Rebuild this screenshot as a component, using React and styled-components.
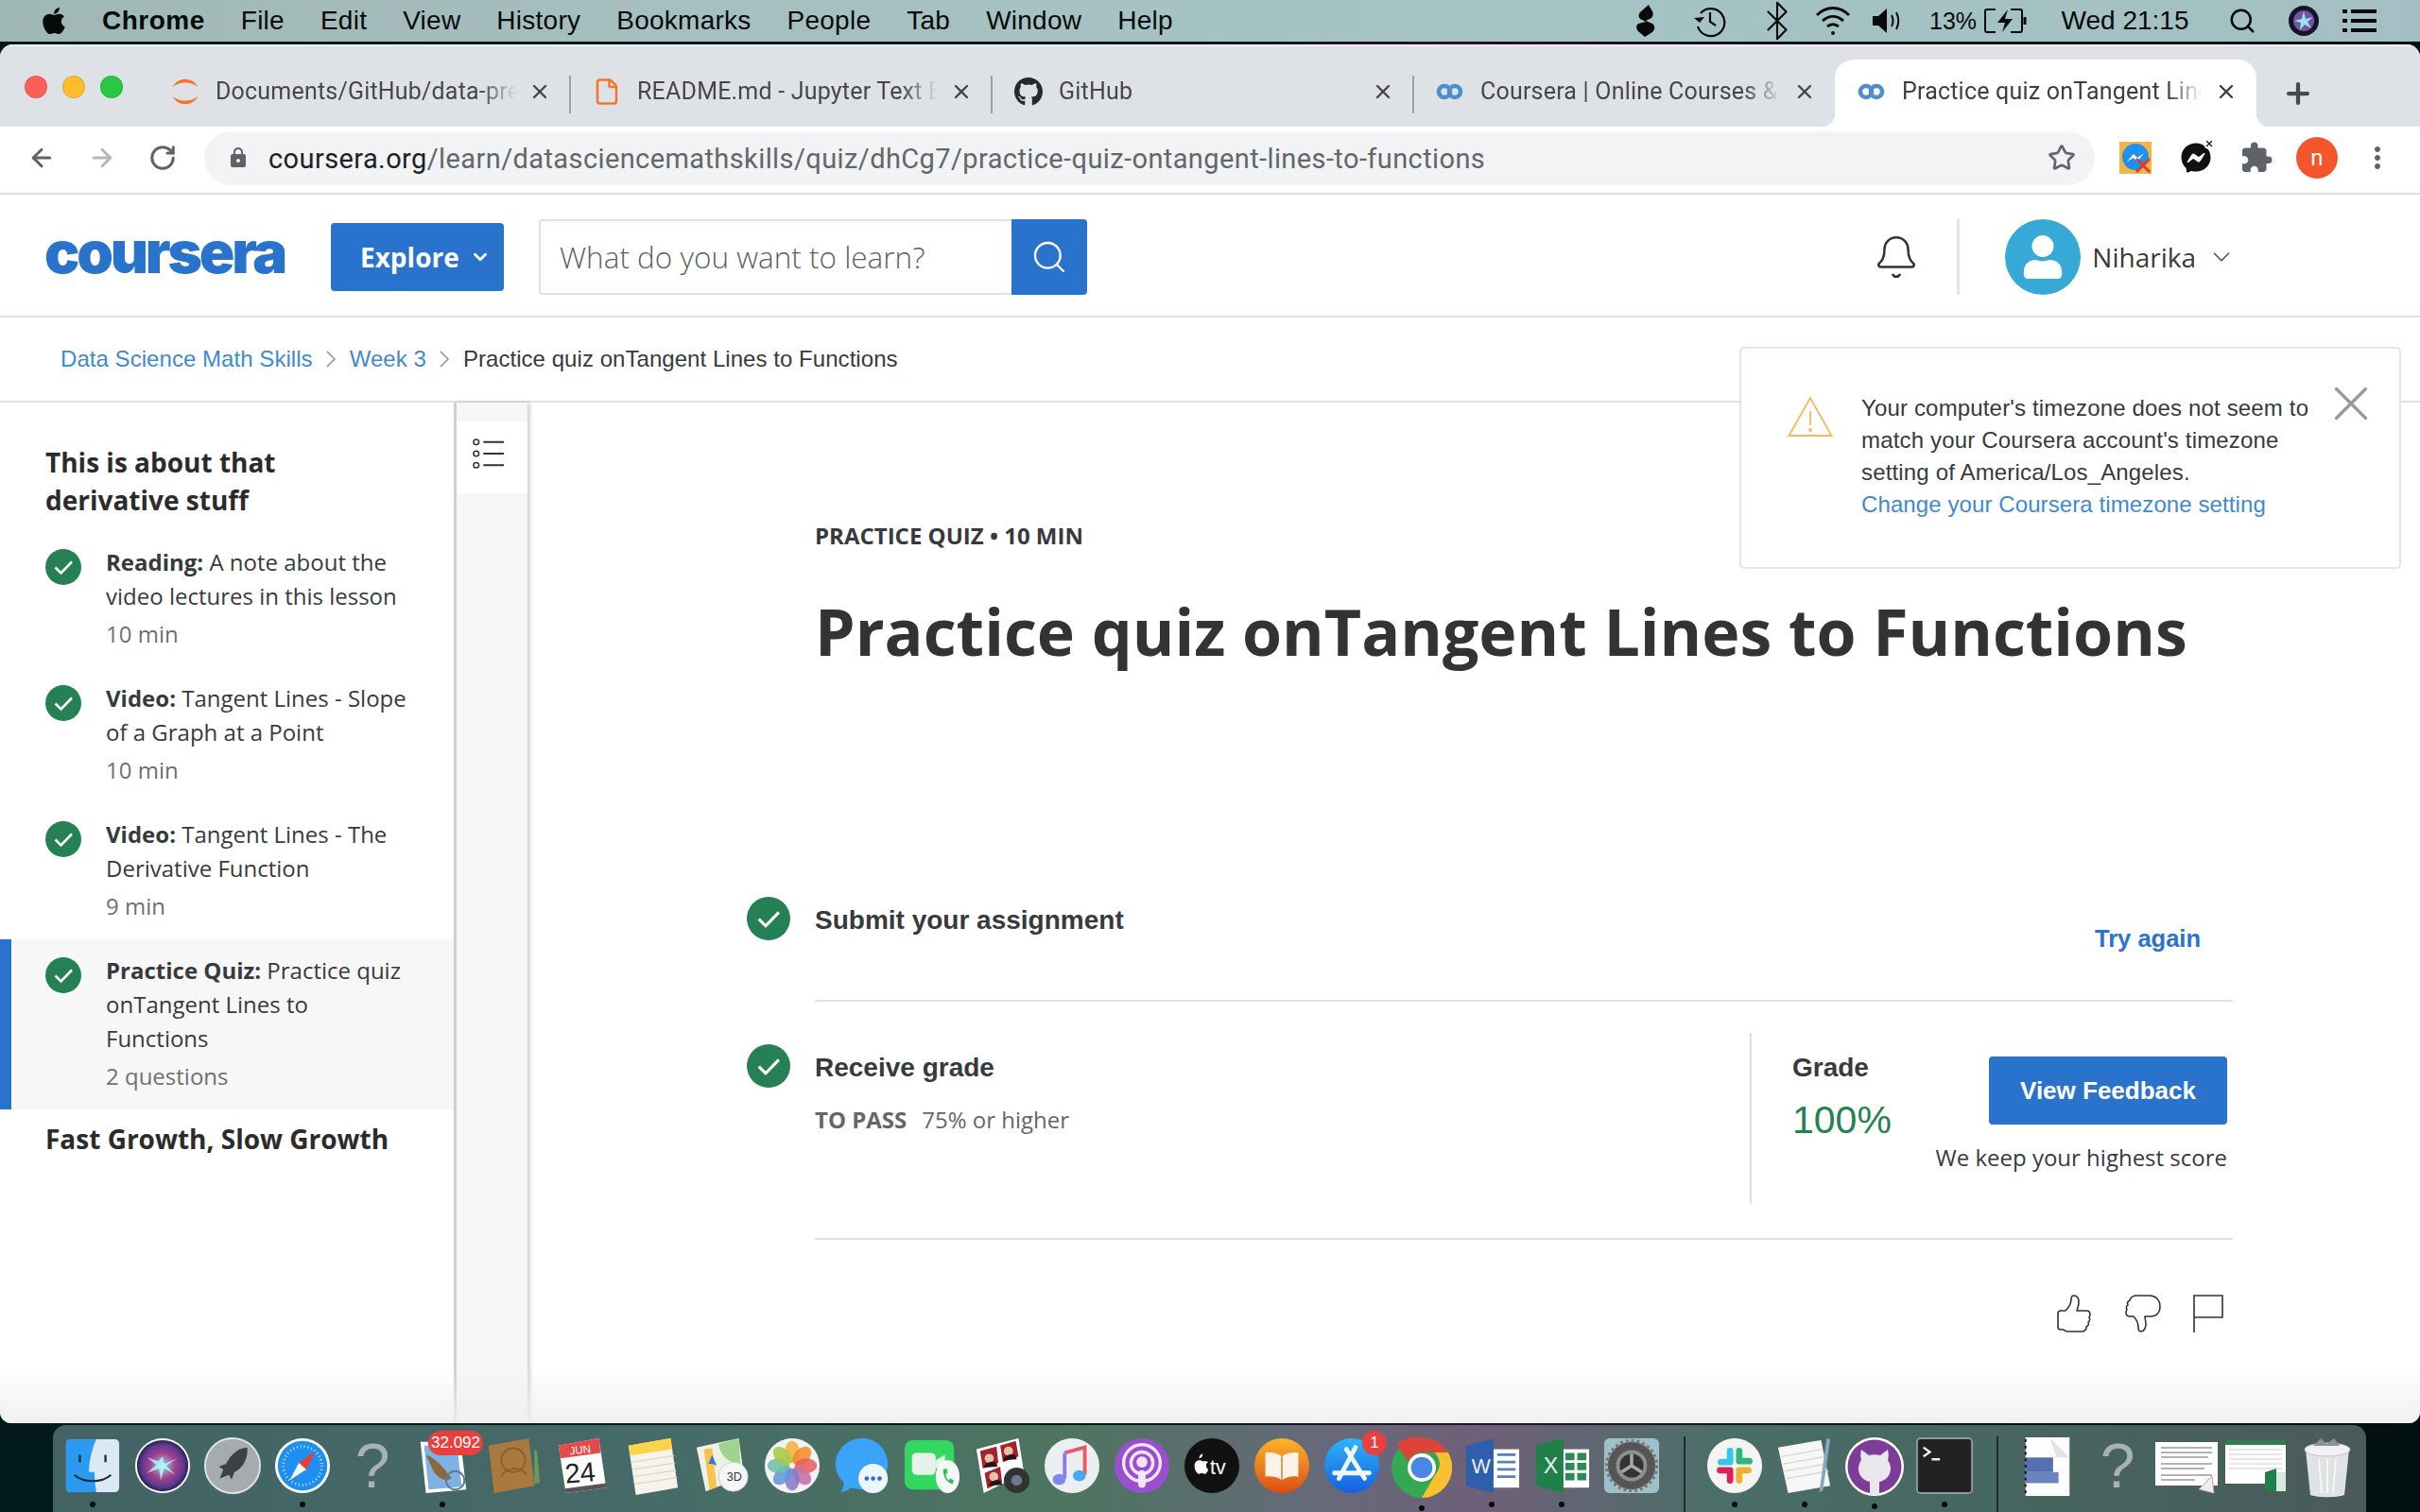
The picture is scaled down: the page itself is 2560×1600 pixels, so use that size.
import React from "react";
import styled, { createGlobalStyle } from "styled-components";
import { ArrowLeft, ArrowRight, RotateCw, Star, Plus, Search, ChevronDown, Bell, X, Bluetooth, File } from "lucide-react";
import { FaApple, FaGithub, FaFacebookMessenger, FaUser } from "react-icons/fa";
import { MdExtension, MdMoreVert, MdLock } from "react-icons/md";

const GlobalStyle = createGlobalStyle`
  html, body { margin: 0; padding: 0; background: #041618; }
  * { box-sizing: border-box; }
  body { font-family: "Liberation Sans", Arial, sans-serif; }
`;

const Desktop = styled.div`
  width: 2560px;
  height: 1600px;
  overflow: hidden;
  display: flex;
  flex-direction: column;
  background: linear-gradient(90deg, #021a1c 0%, #04191b 45%, #2a1030 60%, #0a1414 80%, #020f10 100%);
`;

/* mac menu bar */
const MenuBar = styled.div`
  height: 44px;
  flex: none;
  display: flex;
  align-items: center;
  padding: 0 46px 0 42px;
  background: linear-gradient(90deg, #a0b8b4 0%, #a6bfc0 30%, #a5c4c4 62%, #a3bfc3 100%);
  color: #060a0a;
  font-size: 28px;
`;

const AppleMark = styled.span`
  display: flex;
  width: 30px;
  margin-right: 36px;
`;

const MenuItem = styled.span`
  margin-right: 38px;
  font-weight: ${(p) => (p.$bold ? 700 : 400)};
  letter-spacing: ${(p) => (p.$bold ? 0.5 : 0.25)}px;
  white-space: nowrap;
`;

const Status = styled.div`
  margin-left: auto;
  display: flex;
  align-items: center;
`;

const StatusItem = styled.span`
  display: flex;
  align-items: center;
  justify-content: center;
  margin-left: ${(p) => p.$ml}px;
  width: ${(p) => p.$w}px;
  font-size: ${(p) => p.$fs || 28}px;
  white-space: nowrap;
`;

const Window = styled.div`
  position: relative;
  margin-top: 3px;
  height: 1459px;
  flex: none;
  display: flex;
  flex-direction: column;
  background: #fff;
  border-radius: 14px 14px 12px 12px;
  overflow: hidden;
`;

const TabStrip = styled.div`
  height: 87px;
  flex: none;
  display: flex;
  align-items: flex-end;
  background: #dee1e6;
  padding-left: 26px;
  box-shadow: inset 0 2px 0 #eceef0;
`;

const Lights = styled.div`
  width: 131px;
  height: 71px;
  display: flex;
  gap: 16px;
  padding-top: 17px;
`;

const Light = styled.span`
  width: 24px;
  height: 24px;
  border-radius: 50%;
  background: ${(p) => p.$c};
  border: 1px solid rgba(0, 0, 0, 0.1);
`;

const Tab = styled.div`
  position: relative;
  width: 446px;
  height: 71px;
  display: flex;
  align-items: center;
  padding: 0 20px 3px 24px;
  background: ${(p) => (p.$active ? "#fff" : "transparent")};
  border-radius: 20px 20px 0 0;
  color: ${(p) => (p.$active ? "#3c4043" : "#45474b")};
  &::before {
    content: "";
    display: ${(p) => (p.$divider ? "block" : "none")};
    position: absolute;
    left: -1px;
    top: 17px;
    width: 2px;
    height: 40px;
    background: #9ea1a5;
  }
`;

const TabFlare = styled.span`
  position: absolute;
  bottom: 0;
  ${(p) => (p.$side === "left" ? "left: -14px;" : "right: -14px;")}
  width: 14px;
  height: 14px;
  background: radial-gradient(circle at ${(p) => (p.$side === "left" ? "0 0" : "100% 0")}, transparent 14px, #fff 14.5px);
`;

const TabIcon = styled.span`
  width: 30px;
  height: 30px;
  flex: none;
  display: flex;
  align-items: center;
  justify-content: center;
`;

const TabTitle = styled.span`
  margin-left: 17px;
  width: 318px;
  flex: none;
  font-family: Roboto, sans-serif;
  font-size: 25px;
  line-height: 34px;
  letter-spacing: 0.2px;
  white-space: nowrap;
  overflow: hidden;
  -webkit-mask-image: linear-gradient(90deg, #000 88%, transparent 100%);
  mask-image: linear-gradient(90deg, #000 88%, transparent 100%);
`;

const TabClose = styled.span`
  margin-left: 13px;
  display: flex;
  width: 24px;
  justify-content: center;
`;

const NewTab = styled.span`
  display: flex;
  margin: 0 0 18px 27px;
  color: #46484b;
`;

const Toolbar = styled.div`
  height: 72px;
  flex: none;
  display: flex;
  align-items: center;
  padding: 0 0 4px 29px;
  border-bottom: 2px solid #dcdcdf;
  color: #5f6368;
`;

const NavButton = styled.span`
  display: flex;
  width: 30px;
  margin-right: ${(p) => p.$mr}px;
  color: ${(p) => p.$c || "#5f6368"};
`;

const UrlBar = styled.div`
  width: 2000px;
  height: 57px;
  flex: none;
  display: flex;
  align-items: center;
  padding: 0 20px 0 24px;
  border-radius: 29px;
  background: #f1f3f4;
  font-family: Roboto, sans-serif;
  font-size: 29px;
  line-height: 36px;
  letter-spacing: 0.4px;
  color: #63666a;
  b { font-weight: 400; color: #202124; }
`;

const UrlText = styled.span`
  margin-left: 20px;
  margin-top: 1px;
  flex: 1;
  white-space: nowrap;
`;

const Extensions = styled.div`
  display: flex;
  align-items: center;
  gap: 28px;
  padding-left: 25px;
`;

const ExtIcon = styled.span`
  position: relative;
  width: 36px;
  height: 36px;
  display: flex;
  align-items: center;
  justify-content: center;
`;

const ExtBadge = styled.span`
  position: absolute;
  top: -3px;
  right: -2px;
  width: 12px;
  height: 12px;
  border-radius: 50%;
  background: #fff;
  display: flex;
  align-items: center;
  justify-content: center;
  color: #111;
`;

const Profile = styled.span`
  width: 44px;
  height: 44px;
  margin: 0 -4px;
  border-radius: 50%;
  background: #f4562c;
  color: #fff;
  font-family: Roboto, sans-serif;
  font-size: 24px;
  display: flex;
  align-items: center;
  justify-content: center;
`;

/* coursera page */
const SiteHeader = styled.header`
  height: 130px;
  flex: none;
  display: flex;
  align-items: center;
  padding: 3px 195px 0 47px;
  border-bottom: 2px solid #e1e1e1;
`;

const Logo = styled.span`
  width: 256px;
  font-family: Inter, sans-serif;
  font-weight: 900;
  font-size: 62px;
  line-height: 60px;
  letter-spacing: -3.2px;
  color: #2a73cc;
  white-space: nowrap;
  margin-top: -10px;
`;

const Explore = styled.button`
  margin-left: 47px;
  width: 183px;
  height: 72px;
  border: 0;
  border-radius: 4px;
  padding: 0 0 0 31px;
  background: #2a73cc;
  color: #fff;
  font-family: "Open Sans", sans-serif;
  font-weight: 700;
  font-size: 28px;
  display: flex;
  align-items: center;
  gap: 11px;
`;

const SearchBox = styled.div`
  margin-left: 37px;
  height: 80px;
  display: flex;
`;

const SearchInput = styled.div`
  width: 500px;
  border: 2px solid #e1e1e1;
  border-right: 0;
  border-radius: 4px 0 0 4px;
  padding-left: 20px;
  display: flex;
  align-items: center;
  font-family: "Open Sans", sans-serif;
  font-weight: 300;
  font-size: 31.500px;
  color: #5f5f5f;
`;

const SearchButton = styled.span`
  width: 80px;
  background: #2a73cc;
  border-radius: 0 4px 4px 0;
  color: #fff;
  display: flex;
  align-items: center;
  justify-content: center;
`;

const BellIcon = styled.span`
  margin-left: auto;
  display: flex;
  color: #333;
`;

const HeaderDivider = styled.span`
  margin: 0 48px 0 39px;
  width: 3px;
  height: 80px;
  background: #e5e5e5;
`;

const Avatar = styled.span`
  width: 80px;
  height: 80px;
  border-radius: 50%;
  background: #36a9d6;
  color: #fff;
  display: flex;
  align-items: center;
  justify-content: center;
  overflow: hidden;
`;

const UserName = styled.span`
  margin: 0 12px;
  font-family: "Open Sans", sans-serif;
  font-size: 28px;
  color: #373a3c;
`;

const Breadcrumbs = styled.nav`
  height: 90px;
  flex: none;
  display: flex;
  align-items: center;
  padding: 0 0 0 64px;
  border-bottom: 2px solid #e1e1e1;
  font-size: 24px;
  letter-spacing: 0.05px;
  color: #373a3c;
`;

const Crumb = styled.span`
  color: #3f8ace;
`;

const CrumbSep = styled.span`
  display: flex;
  width: 39px;
  justify-content: center;
  color: #888;
`;

const Body = styled.div`
  flex: 1;
  min-height: 0;
  display: flex;
`;

const Sidebar = styled.aside`
  width: 480px;
  flex: none;
  padding-top: 43px;
  font-family: "Open Sans", sans-serif;
  color: #373a3c;
`;

const ModuleTitle = styled.h2`
  margin: ${(p) => p.$mt || 0}px 0 0;
  padding: 0 48px;
  font-size: 28px;
  line-height: 40px;
  font-weight: 700;
  color: #2b2b2b;
`;

const LessonList = styled.div`
  margin-top: 13px;
`;

const Lesson = styled.div`
  display: flex;
  padding: 15px 48px 17px ${(p) => (p.$active ? 36 : 48)}px;
  background: ${(p) => (p.$active ? "#f7f7f7" : "#fff")};
  border-left: ${(p) => (p.$active ? "12px solid #2a73cc" : "0")};
`;

const LessonCheck = styled.span`
  flex: none;
  width: 38px;
  height: 38px;
  margin: 4px 26px 0 0;
`;

const LessonText = styled.div`
  font-size: 24px;
  line-height: 36px;
  b { font-weight: 700; }
`;

const LessonMeta = styled.div`
  margin-top: 4px;
  color: #6f6f6f;
`;

const Rail = styled.div`
  width: 78px;
  flex: none;
  border-left: 3px solid #cfcfcf;
  background: #f7f7f7;
  box-shadow: 3px 0 4px rgba(0, 0, 0, 0.18);
  padding-top: 20px;
`;

const RailButton = styled.div`
  height: 76px;
  background: #fff;
  display: flex;
  align-items: center;
  justify-content: center;
  padding: 0 8px 8px 0;
`;

const Main = styled.main`
  flex: 1;
  min-width: 0;
  padding: 124px 198px 0 304px;
  color: #333;
`;

const Eyebrow = styled.div`
  font-family: "Open Sans", sans-serif;
  font-size: 24px;
  line-height: 34px;
  font-weight: 700;
  color: #373a3c;
`;

const Title = styled.h1`
  margin: 40px 0 0;
  font-family: "Open Sans", sans-serif;
  font-size: 68px;
  line-height: 88px;
  font-weight: 700;
  color: #333;
  white-space: nowrap;
`;

const StepRow = styled.div`
  display: flex;
  margin-top: ${(p) => p.$mt || 0}px;
  padding-top: ${(p) => p.$pt || 0}px;
  height: ${(p) => p.$h}px;
  border-bottom: 2px solid #e1e1e1;
`;

const StepCheck = styled.span`
  flex: none;
  width: 46px;
  height: 46px;
  margin: 0 26px 0 -72px;
`;

const StepLabel = styled.div`
  margin-top: 7px;
  font-size: 28px;
  line-height: 36px;
  font-weight: 700;
  color: #373a3c;
`;

const TryAgain = styled.a`
  margin: 26px 34px 0 auto;
  font-size: 25.500px;
  line-height: 36px;
  font-weight: 700;
  color: #2a73cc;
`;

const PassLine = styled.div`
  margin-top: 19px;
  font-family: "Open Sans", sans-serif;
  font-size: 24px;
  line-height: 36px;
  color: #666;
  b { font-weight: 700; margin-right: 16px; }
`;

const GradePanel = styled.div`
  margin: -12px 6px 0 auto;
  width: 505px;
  height: 181px;
  border-left: 2px solid #e1e1e1;
  padding-left: 43px;
  display: flex;
  justify-content: space-between;
`;

const GradeCol = styled.div`
  padding-top: 19px;
`;

const GradeLabel = styled.div`
  font-size: 28px;
  line-height: 36px;
  font-weight: 700;
  color: #373a3c;
`;

const GradeValue = styled.div`
  margin-top: 13px;
  font-size: 41px;
  line-height: 48px;
  color: #1f8354;
`;

const ActionCol = styled.div`
  padding-top: 25px;
  display: flex;
  flex-direction: column;
  align-items: flex-end;
`;

const FeedbackButton = styled.button`
  width: 252px;
  height: 72px;
  border: 0;
  border-radius: 4px;
  background: #2a73cc;
  color: #fff;
  font-family: "Liberation Sans", sans-serif;
  font-weight: 700;
  font-size: 26px;
`;

const KeepNote = styled.div`
  margin-top: 18px;
  font-family: "Open Sans", sans-serif;
  font-size: 24px;
  line-height: 34px;
  color: #373a3c;
  white-space: nowrap;
`;

const Reactions = styled.div`
  display: flex;
  justify-content: flex-end;
  gap: 34px;
  padding: 58px 10px 0 0;
  color: #333;
`;

const Toast = styled.div`
  position: absolute;
  top: 320px;
  left: 1840px;
  width: 700px;
  height: 235px;
  background: #fff;
  border: 2px solid #e5e5e5;
  border-radius: 5px;
  padding: 46px 0 0 49px;
  display: flex;
  align-items: flex-start;
`;

const ToastIcon = styled.span`
  margin-top: 4px;
  display: flex;
`;

const ToastText = styled.div`
  margin-left: 30px;
  width: 490px;
  font-size: 24px;
  line-height: 34px;
  letter-spacing: 0.16px;
  color: #373a3c;
  a { color: #3f8ace; letter-spacing: 0.1px; }
`;

const ToastClose = styled.span`
  margin: -19px 0 0 -3px;
  display: flex;
  color: #999;
`;

const BottomFade = styled.div`
  position: absolute;
  left: 0;
  right: 0;
  bottom: 0;
  height: 60px;
  background: linear-gradient(180deg, rgba(240, 240, 240, 0), rgba(238, 238, 238, 0.85));
  pointer-events: none;
`;

/* dock */
const Dock = styled.div`
  margin: 2px 0 0 56px;
  width: 2447px;
  flex: 1;
  display: flex;
  padding: 12px 4px 0 5px;
  border-radius: 14px 14px 0 0;
  background: linear-gradient(90deg, #436365 0%, #466a68 25%, #4d7560 44%, #66697a 55%, #6e6078 62%, #4b6e68 72%, #46665f 85%, #4a5a5a 100%);
`;

const DockCell = styled.div`
  position: relative;
  width: 74px;
  flex: none;
  display: flex;
  flex-direction: column;
  align-items: center;
  &::after {
    content: "";
    display: ${(p) => (p.$on ? "block" : "none")};
    width: 6px;
    height: 6px;
    margin-top: 7px;
    border-radius: 50%;
    background: #050a0a;
  }
  svg { display: block; }
`;

const DockSep = styled.span`
  width: 2px;
  height: 80px;
  margin: 0 15px 0 18px;
  background: #1e2a2a;
  flex: none;
`;

const DockBadge = styled.span`
  position: absolute;
  top: -6px;
  right: ${(p) => p.$r || 0}px;
  min-width: 26px;
  height: 26px;
  padding: 0 3px;
  border-radius: 13px;
  background: #e8403f;
  color: #fff;
  font-size: 17px;
  line-height: 26px;
  text-align: center;
`;

const Check = () => (
  <svg viewBox="0 0 38 38" width="100%" height="100%" style={{ display: "block" }}>
    <circle cx="19" cy="19" r="19" fill="#268056" />
    <path d="M10.5 19.5l6 6 11.5-12" fill="none" stroke="#fff" strokeWidth="2.6" />
  </svg>
);

const CourseraFav = () => (
  <svg width="30" height="22" viewBox="0 0 30 22">
    <circle cx="9" cy="11" r="6" fill="none" stroke="#4a8fcf" strokeWidth="4.6" />
    <circle cx="20" cy="11" r="6" fill="none" stroke="#4a8fcf" strokeWidth="4.6" />
  </svg>
);

const JupyterFav = () => (
  <svg width="32" height="34" viewBox="0 0 30 32">
    <path d="M2 11C6 0 24 0 28 11 22 5 8 5 2 11z" fill="#f37726" />
    <path d="M2 21c4 11 22 11 26 0-6 6-20 6-26 0z" fill="#f37726" />
  </svg>
);

const CloseGlyph = () => <X size={24} strokeWidth={2.4} />;

const dockIcons = {
  finder: (
    <svg width="62" height="62" viewBox="0 0 64 64">
      <rect x="3" y="3" width="58" height="58" rx="5" fill="#dbe9f4" />
      <path d="M8 3h28c-6 14-8 26-8 36h6c0 8 1 15 2 22H8a5 5 0 0 1-5-5V8a5 5 0 0 1 5-5z" fill="#2a9bf0" />
      <path d="M18 20v8M46 20v8" stroke="#1c2a3a" strokeWidth="2.4" />
      <path d="M12 42c10 9 30 9 40 0" stroke="#1c2a3a" strokeWidth="2.2" fill="none" />
    </svg>
  ),
  siri: (
    <svg width="62" height="62" viewBox="0 0 64 64">
      <defs>
        <radialGradient id="sg" cx="50%" cy="50%" r="55%">
          <stop offset="0" stopColor="#7fe0ea" />
          <stop offset=".45" stopColor="#a83f8c" />
          <stop offset=".75" stopColor="#5a3a90" />
          <stop offset="1" stopColor="#101030" />
        </radialGradient>
      </defs>
      <circle cx="32" cy="32" r="30" fill="#fff" />
      <circle cx="32" cy="32" r="28" fill="url(#sg)" />
      <path d="M32 22l2 8 14-6-12 8 10 10-12-7-4 13-2-13-13 5 10-9-10-8 12 4z" fill="#bff" opacity=".75" />
    </svg>
  ),
  launchpad: (
    <svg width="62" height="62" viewBox="0 0 64 64">
      <circle cx="32" cy="32" r="30" fill="#a6abae" />
      <circle cx="32" cy="32" r="30" fill="none" stroke="#dfe2e3" strokeWidth="2" />
      <path d="M48 12c-10 1-18 8-23 18l-8 3 5 3-4 10 10-4 3 5 3-8c10-5 15-15 14-27z" fill="#3d4144" />
    </svg>
  ),
  safari: (
    <svg width="62" height="62" viewBox="0 0 64 64">
      <circle cx="32" cy="32" r="30" fill="#fff" />
      <circle cx="32" cy="32" r="27" fill="#1e8ef0" />
      <circle cx="32" cy="32" r="21" fill="none" stroke="#cfe6fb" strokeWidth="3" strokeDasharray="1 3" />
      <path d="M46 16L28 29l8 7z" fill="#f03b30" />
      <path d="M18 48l10-19 8 7z" fill="#fff" />
    </svg>
  ),
  mail: (
    <svg width="62" height="62" viewBox="0 0 64 64">
      <path d="M8 6h44l6 52-44 4z" fill="#fff" />
      <path d="M12 10h36l5 45-36 3z" fill="#7fb2e2" />
      <path d="M14 20c10 3 20 14 28 26l-6 2c-8-2-14-8-16-15z" fill="#8a6a3c" />
      <circle cx="46" cy="48" r="10" fill="none" stroke="#5a7a98" strokeWidth="2" />
    </svg>
  ),
  contacts: (
    <svg width="62" height="62" viewBox="0 0 64 64">
      <path d="M6 10L50 2l6 52-44 8z" fill="#a97a3f" />
      <path d="M56 14l3 2 3 34-6 2z" fill="#6a9a58" />
      <circle cx="33" cy="26" r="13" fill="none" stroke="#8a6030" strokeWidth="2" />
      <path d="M20 44c4-10 22-12 27-2" fill="none" stroke="#8a6030" strokeWidth="2" />
    </svg>
  ),
  calendar: (
    <svg width="62" height="62" viewBox="0 0 64 64">
      <path d="M6 10L50 2l8 54-44 6z" fill="#fff" />
      <path d="M6 10L50 2l2 16L8 24z" fill="#e44a48" />
      <path d="M14 62l44-6v-5L13 57z" fill="#555" />
      <text x="18" y="19" fontSize="12" fill="#fff" fontFamily="Liberation Sans" transform="rotate(-6 28 15)">JUN</text>
      <text x="13" y="50" fontSize="30" fill="#222" fontFamily="Liberation Sans" transform="rotate(-5 30 40)">24</text>
    </svg>
  ),
  notes: (
    <svg width="62" height="62" viewBox="0 0 64 64">
      <path d="M6 10L52 2l8 54-46 8z" fill="#f5f3ea" />
      <path d="M6 10L52 2l2 12L8 21z" fill="#fcd34a" />
      <path d="M10 28l46-7M11 36l46-7M12 44l46-7M13 52l46-7" stroke="#d8d8d0" strokeWidth="1.2" />
    </svg>
  ),
  maps: (
    <svg width="62" height="62" viewBox="0 0 64 64">
      <path d="M4 12L50 2l6 42-42 16z" fill="#eef2e4" />
      <path d="M28 8c2 14 10 20 24 22l-2-28z" fill="#9fd38f" />
      <path d="M12 14l6 44 8-3-5-42z" fill="#f6c44a" />
      <path d="M17 30l4-10 5 12-5-2z" fill="#2a7ae0" />
      <circle cx="44" cy="44" r="16" fill="#f4f6f6" stroke="#c8d0d4" />
      <text x="37" y="49" fontSize="13" fill="#333" fontFamily="Liberation Sans">3D</text>
    </svg>
  ),
  photos: (
    <svg width="62" height="62" viewBox="0 0 64 64">
      <circle cx="32" cy="32" r="30" fill="#f2f2f2" />
      {["#f4b13c", "#f28b2e", "#e8605a", "#c66fa8", "#8a78c6", "#5f9ad8", "#6fbfa8", "#a8c84a"].map((c, i) => (
        <ellipse key={c} cx="32" cy="17" rx="8" ry="12" fill={c} opacity=".88" transform={`rotate(${i * 45} 32 32)`} />
      ))}
    </svg>
  ),
  messages: (
    <svg width="62" height="62" viewBox="0 0 64 64">
      <path d="M32 2c16 0 28 13 28 28s-12 28-28 28c-4 0-8-1-12-2-4 3-8 5-12 5 3-3 4-7 4-11C6 45 3 38 3 30 3 15 16 2 32 2z" fill="#3aa4f8" />
      <circle cx="44" cy="46" r="16" fill="#eef6fd" />
      <circle cx="37" cy="46" r="2.4" fill="#2a70c0" />
      <circle cx="44" cy="46" r="2.4" fill="#2a70c0" />
      <circle cx="51" cy="46" r="2.4" fill="#2a70c0" />
    </svg>
  ),
  facetime: (
    <svg width="62" height="62" viewBox="0 0 64 64">
      <rect x="2" y="4" width="54" height="54" rx="9" fill="#32d860" />
      <rect x="10" y="18" width="26" height="24" rx="5" fill="#e8f2ea" />
      <path d="M36 26l10-6v20l-10-6z" fill="#e8f2ea" />
      <ellipse cx="49" cy="44" rx="13" ry="18" fill="#f4f8f4" />
      <path d="M44 36c0 8 4 14 10 16l2-4-4-2-2 2c-2-2-3-4-3-7l2-1-1-5z" fill="#2bbf5a" />
    </svg>
  ),
  photobooth: (
    <svg width="62" height="62" viewBox="0 0 64 64">
      <path d="M4 14L50 2l6 38-44 22z" fill="#fff" />
      <path d="M8 16l18-5 2 18-17 6zM30 10l17-5 3 17-17 6zM13 40l17-7 2 17-16 7z" fill="#a8202c" />
      <circle cx="18" cy="24" r="5" fill="#e8c0a8" />
      <path d="M12 34c2-6 10-8 14-5l1 4z" fill="#221614" />
      <circle cx="39" cy="16" r="5" fill="#e8c0a8" />
      <path d="M33 26c2-6 10-8 14-5l1 4z" fill="#221614" />
      <circle cx="23" cy="44" r="5" fill="#e8c0a8" />
      <path d="M17 54c2-6 10-8 14-5l1 4z" fill="#221614" />
      <circle cx="48" cy="48" r="14" fill="#333" />
      <circle cx="48" cy="48" r="6" fill="#6a7a8a" />
    </svg>
  ),
  music: (
    <svg width="62" height="62" viewBox="0 0 64 64">
      <circle cx="32" cy="32" r="30" fill="#eceff1" />
      <path d="M24 18l22-6v30" fill="none" stroke="#e85a6a" strokeWidth="4" />
      <path d="M24 18v28" fill="none" stroke="#8a7ce0" strokeWidth="4" />
      <ellipse cx="18" cy="47" rx="7" ry="6" fill="#7a88f0" />
      <ellipse cx="40" cy="43" rx="7" ry="6" fill="#4aa8f0" />
    </svg>
  ),
  podcasts: (
    <svg width="62" height="62" viewBox="0 0 64 64">
      <circle cx="32" cy="32" r="30" fill="#9a4fd0" />
      <circle cx="32" cy="29" r="20" fill="none" stroke="#f2e6fa" strokeWidth="3.5" />
      <circle cx="32" cy="29" r="12" fill="none" stroke="#f2e6fa" strokeWidth="3.5" />
      <circle cx="32" cy="28" r="6" fill="#f2e6fa" />
      <rect x="28" y="37" width="8" height="19" rx="4" fill="#f2e6fa" />
    </svg>
  ),
  tv: (
    <svg width="62" height="62" viewBox="0 0 64 64">
      <circle cx="32" cy="32" r="30" fill="#111" />
      <path d="M22 24c2 0 4-2 4-5-2 0-4 2-4 5zM27 27c-2 0-3-1-5-1-3 0-5 3-5 6 0 5 3 9 5 9 1 0 2-1 3-1s2 1 3 1c2 0 4-4 4-5-3-2-3-7 0-8-1-1-3-1-5-1z" fill="#fff" transform="translate(-4 0)" />
      <text x="30" y="41" fontSize="22" fill="#fff" fontFamily="Liberation Sans">tv</text>
    </svg>
  ),
  books: (
    <svg width="62" height="62" viewBox="0 0 64 64">
      <defs>
        <linearGradient id="bk" x1="0" y1="0" x2="0" y2="1">
          <stop offset="0" stopColor="#fcb52c" />
          <stop offset="1" stopColor="#dc4c12" />
        </linearGradient>
      </defs>
      <circle cx="32" cy="32" r="30" fill="url(#bk)" />
      <path d="M32 22c-5-4-12-5-18-4v26c6-1 13 0 18 4 5-4 12-5 18-4V18c-6-1-13 0-18 4z" fill="#fbf4e6" />
      <path d="M32 22v26" stroke="#c87a30" strokeWidth="1.5" />
    </svg>
  ),
  appstore: (
    <svg width="62" height="62" viewBox="0 0 64 64">
      <defs>
        <linearGradient id="as" x1="0" y1="0" x2="0" y2="1">
          <stop offset="0" stopColor="#2eb4fa" />
          <stop offset="1" stopColor="#1660e0" />
        </linearGradient>
      </defs>
      <circle cx="32" cy="32" r="30" fill="url(#as)" />
      <path d="M36 12L18 46M26 14l20 32M13 40h38" stroke="#eef6ff" strokeWidth="5" strokeLinecap="round" fill="none" />
    </svg>
  ),
  chrome: (
    <svg width="66" height="66" viewBox="0 0 64 64">
      <circle cx="32" cy="32" r="31" fill="#34a853" />
      <path d="M32 1a31 31 0 0 1 27 15.500H32a15.500 15.500 0 0 0-14 9L6 8A31 31 0 0 1 32 1z" fill="#db4437" />
      <path d="M59 16.500A31 31 0 0 1 32 63l14-24a15.500 15.500 0 0 0-1-22.500z" fill="#fbc02d" />
      <circle cx="32" cy="32" r="14.500" fill="#fff" />
      <circle cx="32" cy="32" r="11" fill="#4a86e8" />
    </svg>
  ),
  word: (
    <svg width="62" height="62" viewBox="0 0 64 64">
      <rect x="32" y="14" width="30" height="42" fill="#fff" />
      <path d="M38 20h20M38 28h20M38 36h20M38 44h20" stroke="#5a80b8" strokeWidth="3" />
      <path d="M4 10L34 2v60L4 54z" fill="#2f5eab" />
      <text x="10" y="40" fontSize="22" fill="#eef" fontFamily="Liberation Sans">W</text>
    </svg>
  ),
  excel: (
    <svg width="62" height="62" viewBox="0 0 64 64">
      <rect x="32" y="14" width="30" height="42" fill="#fff" />
      <path d="M36 18h10v8H36zM49 18h10v8H49zM36 29h10v8H36zM49 29h10v8H49zM36 40h10v8H36zM49 40h10v8H49z" fill="#2f8a58" />
      <path d="M4 10L34 2v60L4 54z" fill="#20804a" />
      <text x="12" y="40" fontSize="24" fill="#eef" fontFamily="Liberation Sans">X</text>
    </svg>
  ),
  settings: (
    <svg width="62" height="62" viewBox="0 0 64 64">
      <rect x="2" y="2" width="60" height="60" rx="6" fill="#9ec0c8" />
      <circle cx="32" cy="32" r="26" fill="#555" />
      <circle cx="32" cy="32" r="27" fill="none" stroke="#777" strokeWidth="4" strokeDasharray="3 3" />
      <circle cx="32" cy="32" r="17" fill="#8d8f90" />
      <circle cx="32" cy="32" r="13" fill="#333" />
      <path d="M32 19v13M21 39l11-7M43 39l-11-7" stroke="#a8aaac" strokeWidth="3.5" />
    </svg>
  ),
  slack: (
    <svg width="62" height="62" viewBox="0 0 64 64">
      <circle cx="32" cy="32" r="30" fill="#f4f4f2" />
      <g strokeWidth="7" strokeLinecap="round" fill="none">
        <path d="M27 16v12M27 28H17" stroke="#36c5f0" />
        <path d="M48 27H37M37 27V16" stroke="#2eb67d" />
        <path d="M37 48V37M37 37h10" stroke="#ecb22e" />
        <path d="M16 37h11M27 37v11" stroke="#e01e5a" />
      </g>
    </svg>
  ),
  textedit: (
    <svg width="62" height="62" viewBox="0 0 64 64">
      <path d="M3 12L50 4l10 50-46 8z" fill="#f7f7f5" />
      <path d="M7 22l45-8M9 30l45-8M10 38l46-8M12 46l46-8" stroke="#d6d6d4" strokeWidth="1.2" />
      <path d="M56 2l4 1-8 56-4 2z" fill="#8aa6c0" />
    </svg>
  ),
  github: (
    <svg width="64" height="64" viewBox="0 0 64 64">
      <circle cx="32" cy="32" r="31" fill="#fff" />
      <circle cx="32" cy="32" r="28.500" fill="#7d3c98" />
      <path d="M18 14l8 6c4-1 8-1 12 0l8-6c1 4 1 8 0 11 2 3 3 6 3 9 0 8-6 13-12 14v14H27V48c-6-1-12-6-12-14 0-3 1-6 3-9-1-3-1-7 0-11z" fill="#e8e8ec" />
    </svg>
  ),
  terminal: (
    <svg width="62" height="62" viewBox="0 0 64 64">
      <rect x="2" y="2" width="60" height="60" rx="4" fill="#222" stroke="#8d9aa0" strokeWidth="2" />
      <path d="M9 12l7 5-7 5M18 25h9" stroke="#f0f0f0" strokeWidth="2.4" fill="none" />
    </svg>
  ),
  docblue: (
    <svg width="62" height="64" viewBox="0 0 64 64">
      <rect x="8" y="0" width="48" height="64" fill="#fdfdfd" />
      <rect x="8" y="22" width="30" height="16" fill="#5570b0" />
      <rect x="8" y="38" width="36" height="12" fill="#6a84c0" />
      <path d="M34 0l22 22-14 0z" fill="#dfe3e8" />
      <path d="M8 2v60" stroke="#111" strokeWidth="2" strokeDasharray="3 4" />
    </svg>
  ),
  doctext: (
    <svg width="68" height="62" viewBox="0 0 68 62">
      <rect x="0" y="6" width="66" height="46" fill="#fff" />
      <path d="M6 12h54M6 17h54M6 22h50M6 29h54M6 34h46M6 41h54M6 46h36" stroke="#9a9a9a" strokeWidth="1.4" />
      <path d="M46 56l14-14 2 18z" fill="#eee" stroke="#aaa" />
    </svg>
  ),
  docsheet: (
    <svg width="68" height="62" viewBox="0 0 68 62">
      <rect x="0" y="4" width="64" height="46" fill="#fff" />
      <rect x="0" y="4" width="64" height="5" fill="#2a8050" />
      <path d="M4 14h56M4 19h56M4 24h56M4 29h56M4 34h56" stroke="#ccc" strokeWidth="1" />
      <path d="M42 38l12-4v26l-12-4z" fill="#20804a" />
      <rect x="54" y="38" width="10" height="20" fill="#d8e8dc" />
    </svg>
  ),
  trash: (
    <svg width="62" height="66" viewBox="0 0 62 66">
      <path d="M8 14h46l-5 48c-8 3-28 3-36 0z" fill="#dfe3e4" />
      <ellipse cx="31" cy="14" rx="24" ry="7" fill="#f0f2f3" stroke="#bfc4c6" />
      <path d="M16 10l8-8 6 6 8-6 6 8z" fill="#8a9298" />
      <path d="M22 24l3 36M31 24v36M40 24l-3 36" stroke="#f5f6f6" strokeWidth="2" />
    </svg>
  ),
};

const Help = styled.span`
  font-size: 66px;
  line-height: 62px;
  font-family: "Liberation Sans", sans-serif;
  color: #a9b2b2;
`;

const dockLeft = [
  ["finder", true], ["siri"], ["launchpad"], ["safari", true], ["?"],
  ["mail", true, "32.092"], ["contacts"], ["calendar"], ["notes"], ["maps"],
  ["photos"], ["messages"], ["facetime"], ["photobooth"], ["music"], ["podcasts"], ["tv"],
  ["books"], ["appstore", false, "1"], ["chrome", true], ["word", true], ["excel", true], ["settings"],
];
const dockMid = [["slack", true], ["textedit", true], ["github", true], ["terminal", true]];
const dockRight = [["docblue"], ["?"], ["doctext"], ["docsheet"], ["trash"]];

const DockItems = ({ items }) =>
  items.map(([name, on, badge], i) => (
    <DockCell key={name + i} $on={on}>
      {name === "?" ? <Help>?</Help> : dockIcons[name]}
      {badge && <DockBadge $r={badge === "1" ? 0 : -6}>{badge}</DockBadge>}
    </DockCell>
  ));

const tabs = [
  { title: "Documents/GitHub/data-preparation", icon: <JupyterFav /> },
  { title: "README.md - Jupyter Text Editor", icon: <File size={32} color="#f37726" strokeWidth={2} />, divider: true },
  { title: "GitHub", icon: <FaGithub size={32} color="#24292e" />, divider: true },
  { title: "Coursera | Online Courses & Credentials", icon: <CourseraFav />, divider: true },
  { title: "Practice quiz onTangent Lines to Functions", icon: <CourseraFav />, active: true },
];

const lessons = [
  { kind: "Reading:", text: "A note about the video lectures in this lesson", meta: "10 min" },
  { kind: "Video:", text: "Tangent Lines - Slope of a Graph at a Point", meta: "10 min" },
  { kind: "Video:", text: "Tangent Lines - The Derivative Function", meta: "9 min" },
  { kind: "Practice Quiz:", text: "Practice quiz onTangent Lines to Functions", meta: "2 questions", active: true },
];

const CrumbChevron = () => (
  <CrumbSep>
    <svg width="10" height="20" viewBox="0 0 10 20" fill="none" stroke="currentColor" strokeWidth="1.4"><path d="M1 2l8 8-8 8" /></svg>
  </CrumbSep>
);

export default function App() {
  return (
    <Desktop>
      <GlobalStyle />
      <MenuBar>
        <AppleMark><FaApple size={32} /></AppleMark>
        <MenuItem $bold>Chrome</MenuItem>
        {["File", "Edit", "View", "History", "Bookmarks", "People", "Tab", "Window", "Help"].map((m) => (
          <MenuItem key={m}>{m}</MenuItem>
        ))}
        <Status>
          <StatusItem $ml={0} $w={28}>
            <svg width="26" height="34" viewBox="0 0 26 34"><path d="M16 0L7 8c-2 2-2 5 0 7l6 3-8 2c-3 2-2 7 1 9l6 5 8-5c3-3 3-7 0-9l-7-3 6-3c2-2 2-5 1-7z" fill="#0a0a0a" /></svg>
          </StatusItem>
          <StatusItem $ml={36} $w={36}>
            <svg width="36" height="36" viewBox="0 0 36 36" fill="none" stroke="#0a0a0a" strokeWidth="2.2"><path d="M8 10a14.500 14.500 0 1 1-3 14" /><path d="M18 9v10l6 4" /><path d="M1 15l6 5 5-6z" fill="#0a0a0a" stroke="none" /></svg>
          </StatusItem>
          <StatusItem $ml={43} $w={20}><Bluetooth size={46} strokeWidth={1.1} style={{ flex: "none" }} /></StatusItem>
          <StatusItem $ml={29} $w={40}>
            <svg width="38" height="34" viewBox="0 0 38 34" fill="none" stroke="#0a0a0a" strokeWidth="3"><path d="M2 11c10-10 24-10 34 0M8 17c7-6 15-6 22 0M13 23c4-3 8-3 12 0" /><circle cx="19" cy="30" r="2" fill="#0a0a0a" stroke="none" /></svg>
          </StatusItem>
          <StatusItem $ml={20} $w={34}>
            <svg width="34" height="30" viewBox="0 0 34 30"><path d="M2 10h6l9-8v26l-9-8H2z" fill="#0a0a0a" /><path d="M22 9c2 4 2 8 0 12M27 6c3 6 3 12 0 18" fill="none" stroke="#0a0a0a" strokeWidth="2" /></svg>
          </StatusItem>
          <StatusItem $ml={30} $w={46} $fs={25}>13%</StatusItem>
          <StatusItem $ml={10} $w={46}>
            <svg width="46" height="26" viewBox="0 0 46 26" fill="none" stroke="#0a0a0a" strokeWidth="2"><path d="M12 1H3a2 2 0 0 0-2 2v20a2 2 0 0 0 2 2h9M28 1h10a2 2 0 0 1 2 2v20a2 2 0 0 1-2 2H28" /><path d="M25 1L14 15h8l-3 10 11-14h-8z" fill="#0a0a0a" stroke="none" /><path d="M43 9v8" strokeWidth="3" /></svg>
          </StatusItem>
          <StatusItem $ml={37} $w={132}>Wed 21:15</StatusItem>
          <StatusItem $ml={43} $w={30}><Search size={34} strokeWidth={2} /></StatusItem>
          <StatusItem $ml={34} $w={32}>
            <svg width="32" height="32" viewBox="0 0 32 32"><circle cx="16" cy="16" r="16" fill="#141428" /><circle cx="16" cy="16" r="11" fill="#7a4fa8" /><path d="M16 6l2 8 8-2-6 5 4 7-7-4-5 6 1-8-7-2 8-2z" fill="#8fe8ea" /></svg>
          </StatusItem>
          <StatusItem $ml={25} $w={36}>
            <svg width="36" height="26" viewBox="0 0 36 26" fill="#0a0a0a"><path d="M0 1h5v4H0zM9 1h27v4H9zM0 11h5v4H0zM9 11h27v4H9zM0 21h5v4H0zM9 21h27v4H9z" /></svg>
          </StatusItem>
        </Status>
      </MenuBar>

      <Window>
        <TabStrip>
          <Lights>
            <Light $c="#ff5f57" />
            <Light $c="#febc2e" />
            <Light $c="#28c840" />
          </Lights>
          {tabs.map((t) => (
            <Tab key={t.title} $active={t.active} $divider={t.divider}>
              {t.active && <TabFlare $side="left" />}
              <TabIcon>{t.icon}</TabIcon>
              <TabTitle>{t.title}</TabTitle>
              <TabClose><CloseGlyph /></TabClose>
              {t.active && <TabFlare $side="right" />}
            </Tab>
          ))}
          <NewTab><Plus size={34} strokeWidth={3} /></NewTab>
        </TabStrip>

        <Toolbar>
          <NavButton $mr={34}><ArrowLeft size={30} strokeWidth={2.4} /></NavButton>
          <NavButton $mr={34} $c="#b4b6b8"><ArrowRight size={30} strokeWidth={2.4} /></NavButton>
          <NavButton $mr={29}><RotateCw size={30} strokeWidth={2.4} /></NavButton>
          <UrlBar>
            <MdLock size={24} color="#5f6368" />
            <UrlText><b>coursera.org</b>/learn/datasciencemathskills/quiz/dhCg7/practice-quiz-ontangent-lines-to-functions</UrlText>
            <Star size={30} strokeWidth={2.2} />
          </UrlBar>
          <Extensions>
            <ExtIcon>
              <svg width="34" height="34" viewBox="0 0 34 34"><rect width="34" height="34" fill="#f2b544" /><circle cx="17" cy="16" r="14" fill="#1e90f0" /><path d="M8 21l7-8 4 4 7-5-7 9-4-4z" fill="#fff" /><path d="M18 18l14 14M32 18L18 32" stroke="#e23a2e" strokeWidth="3" /></svg>
            </ExtIcon>
            <ExtIcon>
              <FaFacebookMessenger size={32} color="#111" />
              <ExtBadge><X size={10} strokeWidth={3} /></ExtBadge>
            </ExtIcon>
            <ExtIcon><MdExtension size={36} color="#5f6368" /></ExtIcon>
            <Profile>n</Profile>
            <ExtIcon><MdMoreVert size={38} color="#5f6368" /></ExtIcon>
          </Extensions>
        </Toolbar>

        <SiteHeader>
          <Logo>coursera</Logo>
          <Explore>Explore <ChevronDown size={22} strokeWidth={3} /></Explore>
          <SearchBox>
            <SearchInput>What do you want to learn?</SearchInput>
            <SearchButton><Search size={40} strokeWidth={1.4} /></SearchButton>
          </SearchBox>
          <BellIcon><Bell size={50} strokeWidth={1.2} /></BellIcon>
          <HeaderDivider />
          <Avatar><FaUser size={46} /></Avatar>
          <UserName>Niharika</UserName>
          <ChevronDown size={30} strokeWidth={1.4} color="#555" />
        </SiteHeader>

        <Breadcrumbs>
          <Crumb>Data Science Math Skills</Crumb>
          <CrumbChevron />
          <Crumb>Week 3</Crumb>
          <CrumbChevron />
          <span>Practice quiz onTangent Lines to Functions</span>
        </Breadcrumbs>

        <Body>
          <Sidebar>
            <ModuleTitle>This is about that derivative stuff</ModuleTitle>
            <LessonList>
              {lessons.map((l) => (
                <Lesson key={l.kind + l.text} $active={l.active}>
                  <LessonCheck><Check /></LessonCheck>
                  <LessonText>
                    <b>{l.kind}</b> {l.text}
                    <LessonMeta>{l.meta}</LessonMeta>
                  </LessonText>
                </Lesson>
              ))}
            </LessonList>
            <ModuleTitle $mt={11}>Fast Growth, Slow Growth</ModuleTitle>
          </Sidebar>

          <Rail>
            <RailButton>
              <svg width="34" height="34" viewBox="0 0 36 36" fill="none" stroke="#333" strokeWidth="1.6">
                <circle cx="4" cy="5" r="3" /><circle cx="4" cy="18" r="3" /><circle cx="4" cy="31" r="3" />
                <path d="M12 5h23M12 18h23M12 31h23" strokeWidth="2" />
              </svg>
            </RailButton>
          </Rail>

          <Main>
            <Eyebrow>PRACTICE QUIZ • 10 MIN</Eyebrow>
            <Title>Practice quiz onTangent Lines to Functions</Title>

            <StepRow $mt={237} $h={111}>
              <StepCheck><Check /></StepCheck>
              <StepLabel>Submit your assignment</StepLabel>
              <TryAgain>Try again</TryAgain>
            </StepRow>

            <StepRow $pt={45} $h={252}>
              <StepCheck><Check /></StepCheck>
              <div>
                <StepLabel>Receive grade</StepLabel>
                <PassLine><b>TO PASS</b>75% or higher</PassLine>
              </div>
              <GradePanel>
                <GradeCol>
                  <GradeLabel>Grade</GradeLabel>
                  <GradeValue>100%</GradeValue>
                </GradeCol>
                <ActionCol>
                  <FeedbackButton>View Feedback</FeedbackButton>
                  <KeepNote>We keep your highest score</KeepNote>
                </ActionCol>
              </GradePanel>
            </StepRow>

            <Reactions>
              <svg width="40" height="40" viewBox="0 0 40 40" fill="none" stroke="currentColor" strokeWidth="1.6" strokeLinejoin="round">
                <path d="M3 20c0-2 1-3 3-3h5c4-4 6-8 6-12 0-3 1-4 3-4 4 0 5 4 5 7 0 3-1 6-2 9h10c3 0 4 2 4 4 0 1 0 2-1 3 1 2 1 4-1 5 1 2 0 4-2 5 0 3-2 5-5 5H13c-2 0-3-1-4-2H6c-2 0-3-1-3-3z" />
              </svg>
              <svg width="38" height="40" viewBox="0 0 38 40" fill="none" stroke="currentColor" strokeWidth="1.6" strokeLinejoin="round">
                <path d="M12 1h14c6 0 11 4 11 12 0 6-4 10-9 10h-7l1 8c0 4-2 8-5 8-2 0-3-2-3-4 0-5-2-9-5-12H5c-3 0-4-2-4-4 0-1 0-2 1-3-1-2-1-4 1-5-1-2 0-4 2-5 1-3 3-5 7-5z" />
              </svg>
              <svg width="32" height="40" viewBox="0 0 32 40" fill="none" stroke="currentColor" strokeWidth="1.6">
                <path d="M1 40V1h30v23H1" />
              </svg>
            </Reactions>
          </Main>
        </Body>

        <Toast>
          <ToastIcon>
            <svg width="48" height="44" viewBox="0 0 48 44" fill="none" stroke="#f5b75f" strokeWidth="1.8">
              <path d="M24 2L1.500 42h45z" />
              <path d="M24 16v15" />
              <circle cx="24" cy="36" r="1" fill="#f5b75f" />
            </svg>
          </ToastIcon>
          <ToastText>
            Your computer's timezone does not seem to match your Coursera account's timezone setting of America/Los_Angeles.
            <br />
            <a>Change your Coursera timezone setting</a>
          </ToastText>
          <ToastClose><X size={62} strokeWidth={1.3} /></ToastClose>
        </Toast>
        <BottomFade />
      </Window>

      <Dock>
        <DockItems items={dockLeft} />
        <DockSep />
        <DockItems items={dockMid} />
        <DockSep />
        <DockItems items={dockRight} />
      </Dock>
    </Desktop>
  );
}
